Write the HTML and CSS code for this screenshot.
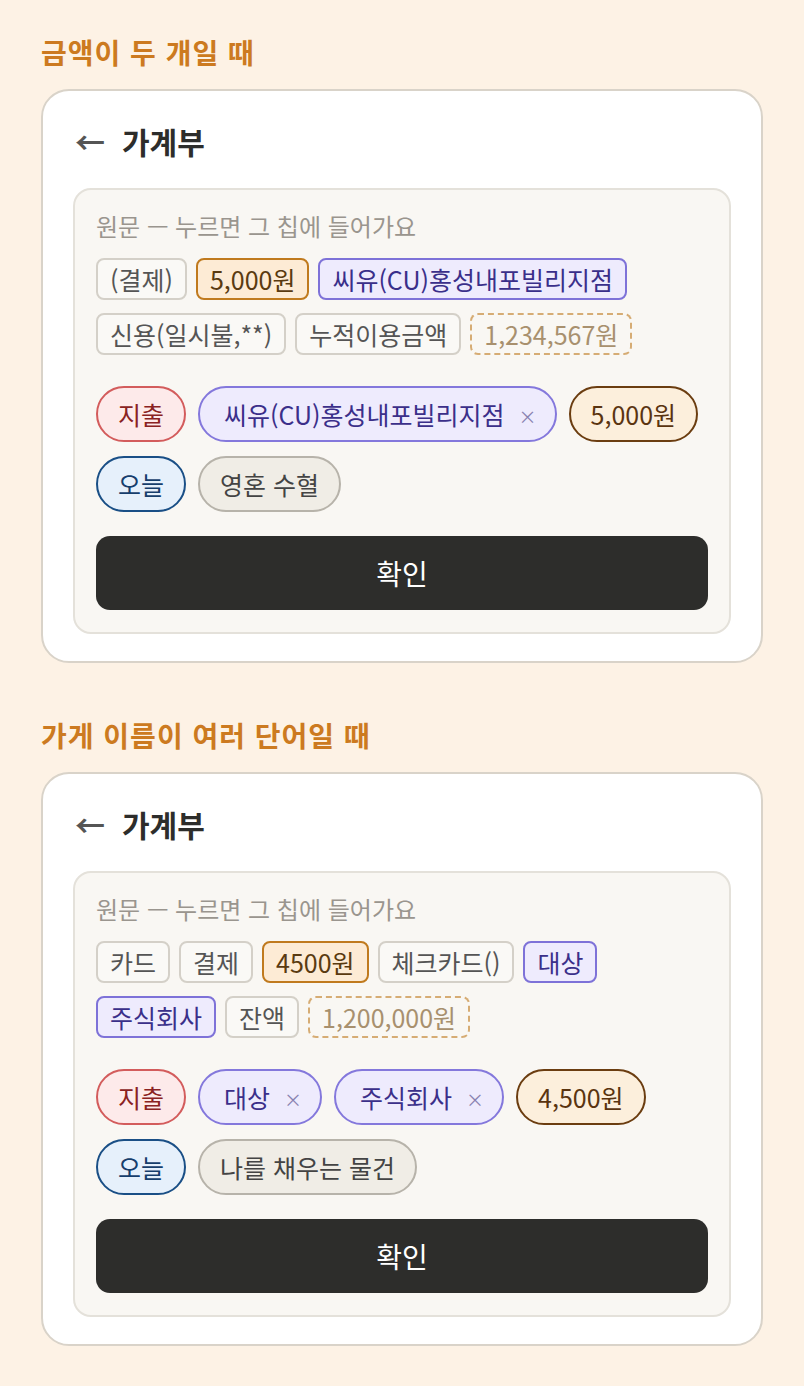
FILE: index.html
```html
<!DOCTYPE html>
<html lang="ko">
<head>
    <meta charset="utf-8">
    <title>가계부 칩 입력</title>
    <link rel="stylesheet" href="styles.css">
</head>
<body>
    <section class="case">
        <h2 class="case-title">금액이 두 개일 때</h2>
        <div class="card">
            <div class="card-header">
                <span class="back">&larr;</span>
                <h1>가계부</h1>
            </div>
            <div class="panel">
                <div class="raw-label">원문 — 누르면 그 칩에 들어가요</div>
                <div class="raw-chips">
                    <span class="chip">(결제)</span>
                    <span class="chip chip-amount">5,000원</span>
                    <span class="chip chip-merchant">씨유(CU)홍성내포빌리지점</span>
                    <span class="chip">신용(일시불,**)</span>
                    <span class="chip">누적이용금액</span>
                    <span class="chip chip-dashed">1,234,567원</span>
                </div>
                <div class="slots">
                    <span class="slot slot-type">지출</span>
                    <span class="slot slot-merchant">씨유(CU)홍성내포빌리지점<span class="remove">&times;</span></span>
                    <span class="slot slot-amount">5,000원</span>
                    <span class="slot slot-date">오늘</span>
                    <span class="slot slot-category">영혼 수혈</span>
                </div>
                <button class="confirm">확인</button>
            </div>
        </div>
    </section>

    <section class="case">
        <h2 class="case-title">가게 이름이 여러 단어일 때</h2>
        <div class="card">
            <div class="card-header">
                <span class="back">&larr;</span>
                <h1>가계부</h1>
            </div>
            <div class="panel">
                <div class="raw-label">원문 — 누르면 그 칩에 들어가요</div>
                <div class="raw-chips">
                    <span class="chip">카드</span>
                    <span class="chip">결제</span>
                    <span class="chip chip-amount">4500원</span>
                    <span class="chip">체크카드()</span>
                    <span class="chip chip-merchant">대상</span>
                    <span class="chip chip-merchant">주식회사</span>
                    <span class="chip">잔액</span>
                    <span class="chip chip-dashed">1,200,000원</span>
                </div>
                <div class="slots">
                    <span class="slot slot-type">지출</span>
                    <span class="slot slot-merchant">대상<span class="remove">&times;</span></span>
                    <span class="slot slot-merchant">주식회사<span class="remove">&times;</span></span>
                    <span class="slot slot-amount">4,500원</span>
                    <span class="slot slot-date">오늘</span>
                    <span class="slot slot-category">나를 채우는 물건</span>
                </div>
                <button class="confirm">확인</button>
            </div>
        </div>
    </section>
</body>
</html>
```

FILE: styles.css
```css
body {
    margin: 0;
    padding: 35px 41px 40px;
    background-color: #fdf2e5;
    font-family: "Noto Sans CJK KR", "Noto Sans", sans-serif;
    color: #2d2d2b;
}
.case + .case {
    margin-top: 55px;
}
.case-title {
    margin: 0 0 20px;
    font-size: 28px;
    line-height: 34px;
    letter-spacing: 1px;
    font-weight: bold;
    color: #cc7a20;
}
.card {
    background: white;
    border: 2px solid #d9d3c9;
    border-radius: 28px;
    padding: 30px 30px 27px;
}
.card-header {
    display: flex;
    align-items: center;
    gap: 17px;
    height: 40px;
    margin-bottom: 27px;
}
.back {
    font-size: 30px;
    font-weight: bold;
    color: #555;
    line-height: 1;
    margin-left: 2px;
}
.card-header h1 {
    margin: 0;
    font-size: 30px;
    font-weight: bold;
    color: #2d2d2b;
}
.panel {
    background: #f9f7f3;
    border: 2px solid #e4e1da;
    border-radius: 18px;
    padding: 21px 21px 22px;
}
.raw-label {
    font-size: 24px;
    line-height: 30px;
    color: #9a958e;
    margin-bottom: 17px;
}
.raw-chips {
    display: flex;
    flex-wrap: wrap;
    gap: 13px 9px;
    margin-bottom: 31px;
}
.chip {
    display: inline-block;
    font-size: 25px;
    line-height: 30px;
    padding: 4px 12px;
    border: 2px solid #d4d0c8;
    border-radius: 8px;
    background: #faf9f6;
    color: #555;
}
.chip-amount {
    background: #fdebd5;
    border-color: #c07a1e;
    color: #5a3a10;
}
.chip-merchant {
    background: #eeebfd;
    border-color: #7e72d8;
    color: #3a2f8a;
}
.chip-dashed {
    background: transparent;
    border: 2px dashed #d6ac74;
    color: #a8906e;
}
.slots {
    display: flex;
    flex-wrap: wrap;
    gap: 14px 12px;
    margin-bottom: 24px;
}
.slot {
    display: inline-flex;
    align-items: center;
    height: 56px;
    box-sizing: border-box;
    font-size: 25px;
    line-height: 30px;
    padding: 0 20px;
    border: 2px solid;
    border-radius: 28px;
}
.slot-type {
    background: #fdeaea;
    border-color: #d35c5c;
    color: #8a2222;
}
.slot-merchant {
    background: #eeebfd;
    border-color: #8478dc;
    color: #3b2f8a;
    padding-left: 24px;
    padding-right: 18px;
}
.remove {
    font-size: 18px;
    line-height: 1;
    color: #8882b0;
    margin: 4px 0 0 14px;
}
.slot-amount {
    background: #fcefdc;
    border-color: #6b3d10;
    color: #5a3410;
}
.slot-date {
    background: #e6f0fb;
    border-color: #1a4f86;
    color: #163e6c;
}
.slot-category {
    background: #f0ede6;
    border-color: #b7b3aa;
    color: #444;
}
.confirm {
    display: block;
    width: 100%;
    height: 74px;
    border: none;
    border-radius: 14px;
    background: #2d2d2b;
    color: white;
    font-family: inherit;
    font-size: 28px;
}
```
